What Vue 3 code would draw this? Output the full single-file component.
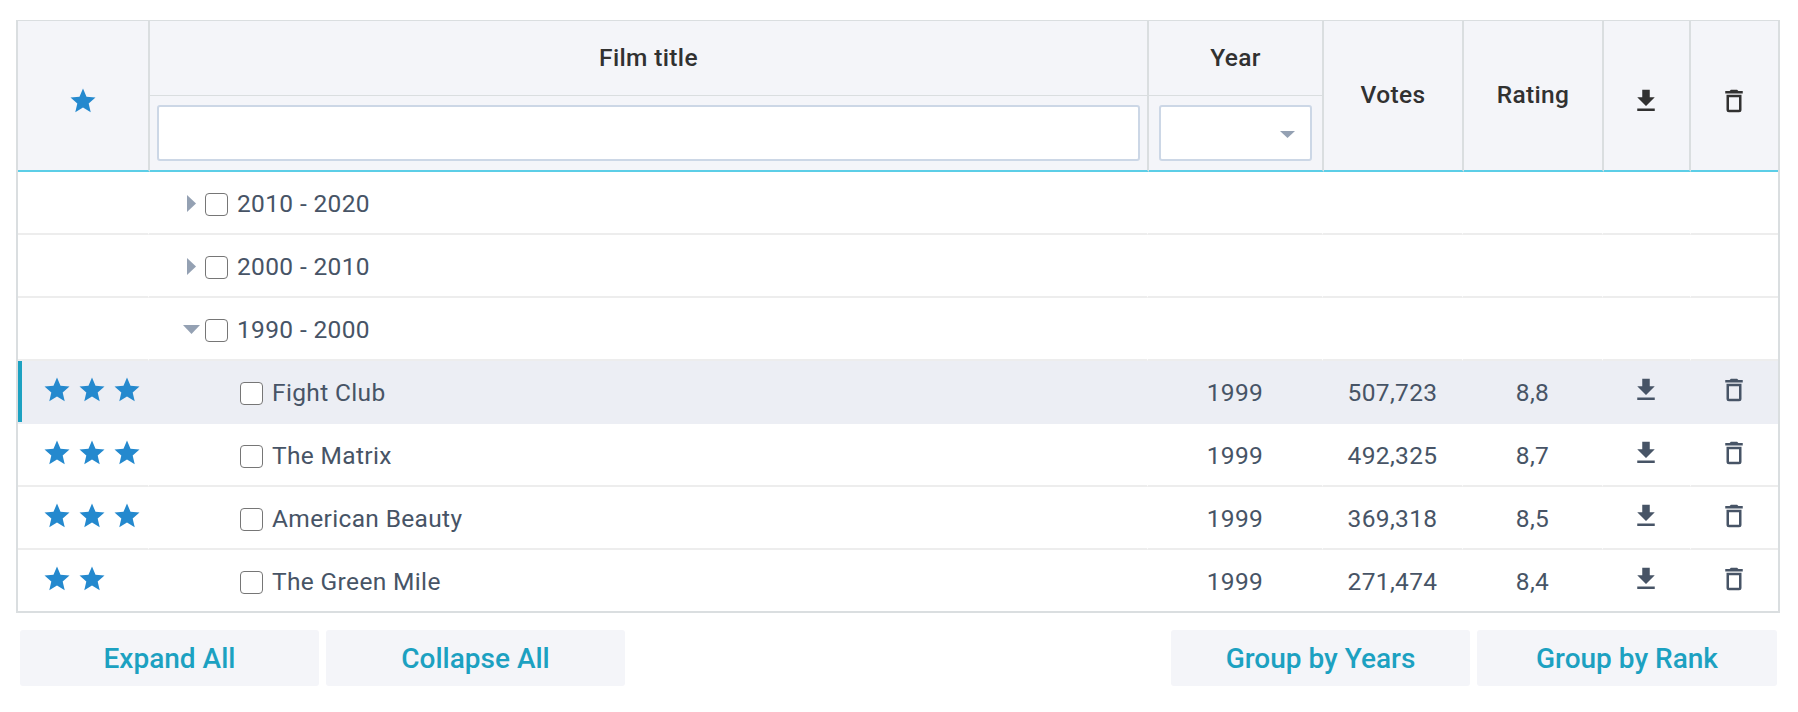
<script setup>
import { ref } from 'vue'

const STAR = 'M12,17.27L18.18,21L16.54,13.97L22,9.24L14.81,8.62L12,2L9.19,8.62L2,9.24L7.45,13.97L5.82,21L12,17.27Z'
const DOWNLOAD = 'M5,20H19V18H5M19,9H15V3H9V9H5L12,16L19,9Z'
const TRASH = 'M6,19A2,2 0 0,0 8,21H16A2,2 0 0,0 18,19V7H6V19M8,9H16V19H8V9M15.5,4L14.5,3H9.5L8.5,4H5V6H19V4H15.5Z'

const filter = ref('')

const rows = [
  { group: true, open: false, title: '2010 - 2020' },
  { group: true, open: false, title: '2000 - 2010' },
  { group: true, open: true, title: '1990 - 2000' },
  { stars: 3, title: 'Fight Club', year: 1999, votes: '507,723', rating: '8,8', selected: true },
  { stars: 3, title: 'The Matrix', year: 1999, votes: '492,325', rating: '8,7' },
  { stars: 3, title: 'American Beauty', year: 1999, votes: '369,318', rating: '8,5' },
  { stars: 2, title: 'The Green Mile', year: 1999, votes: '271,474', rating: '8,4' },
]
</script>

<template>
  <main class="page">
    <section class="table">
      <header class="head">
        <div class="hcell"><svg class="icon star" viewBox="0 0 24 24"><path :d="STAR" /></svg></div>
        <div class="hcell split">
          <div class="caption">Film title</div>
          <div class="filter"><input v-model="filter" class="text-filter" type="text" aria-label="Film title"></div>
        </div>
        <div class="hcell split">
          <div class="caption">Year</div>
          <div class="filter year-filter">
            <div class="select"><svg class="caret" viewBox="0 0 15 7"><path d="M0,0H15L7.5,7Z" /></svg></div>
          </div>
        </div>
        <div class="hcell label">Votes</div>
        <div class="hcell label">Rating</div>
        <div class="hcell tool"><svg class="icon" viewBox="0 0 24 24"><path :d="DOWNLOAD" /></svg></div>
        <div class="hcell tool"><svg class="icon" viewBox="0 0 24 24"><path :d="TRASH" /></svg></div>
      </header>

      <div v-for="row in rows" :key="row.title" class="row" :class="{ selected: row.selected }">
        <div class="cell stars">
          <svg v-for="n in row.stars || 0" :key="n" class="icon star" viewBox="0 0 24 24"><path :d="STAR" /></svg>
        </div>
        <div class="cell title" :class="{ child: !row.group }">
          <span v-if="row.group" class="toggle">
            <svg v-if="row.open" class="down" viewBox="0 0 17 9"><path d="M0,0H17L8.5,9Z" /></svg>
            <svg v-else class="right" viewBox="0 0 9 17"><path d="M0,0L9,8.5L0,17Z" /></svg>
          </span>
          <input class="check" type="checkbox" :aria-label="row.title">
          <span>{{ row.title }}</span>
        </div>
        <div class="cell center">{{ row.year }}</div>
        <div class="cell center">{{ row.votes }}</div>
        <div class="cell center">{{ row.rating }}</div>
        <div class="cell action"><svg v-if="!row.group" class="icon" viewBox="0 0 24 24"><path :d="DOWNLOAD" /></svg></div>
        <div class="cell action"><svg v-if="!row.group" class="icon" viewBox="0 0 24 24"><path :d="TRASH" /></svg></div>
      </div>
    </section>

    <nav class="toolbar">
      <button>Expand All</button>
      <button>Collapse All</button>
      <span class="spacer"></span>
      <button>Group by Years</button>
      <button class="last">Group by Rank</button>
    </nav>
  </main>
</template>

<style>
body {
  background: #fff;
}
</style>

<style scoped>
.page {
  box-sizing: border-box;
  width: 1798px;
  height: 712px;
  padding: 20px 18px 0 16px;
  font-family: Roboto, "Liberation Sans", sans-serif;
  font-size: 24.5px;
  letter-spacing: 0.35px;
  color: #475466;
}
.table {
  box-sizing: border-box;
  height: 593px;
  border: 2px solid #dadee0;
  border-top-width: 1px;
  overflow: hidden;
}
.head {
  display: grid;
  grid-template-columns: 132px 999px 175px 140px 140px 87px 87px;
  height: 151px;
  color: #313131;
  font-weight: 500;
}
.hcell {
  display: flex;
  align-items: center;
  justify-content: center;
  box-sizing: border-box;
  padding-bottom: 1px;
  background: #f4f5f9;
  border-right: 2px solid #dadee0;
  border-bottom: 2px solid #5ccee7;
}
.hcell.label {
  padding-bottom: 3px;
}
.hcell.tool {
  padding-right: 1px;
}
.hcell:last-child {
  border-right: 0;
}
.hcell > .icon {
  margin-top: 11px;
}
.hcell.split {
  flex-direction: column;
  align-items: stretch;
  justify-content: flex-start;
  padding: 0;
}
.caption {
  box-sizing: border-box;
  height: 75px;
  line-height: 74px;
  text-align: center;
  border-bottom: 1px solid #dadee0;
}
.filter {
  display: flex;
  padding: 9px 7px 0;
}
.year-filter {
  padding: 9px 10px 0;
}
.text-filter,
.select {
  box-sizing: border-box;
  flex: 1;
  min-width: 0;
  height: 56px;
  border: 2px solid #ccd7e6;
  border-radius: 3px;
  background: #fff;
}
.text-filter {
  padding: 0 10px;
  font: inherit;
  outline: none;
}
.select {
  display: flex;
  align-items: center;
  justify-content: flex-end;
  padding: 3px 15px 0 0;
}
.icon {
  display: block;
  flex: none;
  width: 30px;
  height: 30px;
  fill: currentColor;
}
.star {
  color: #2489ce;
}
.caret,
.down,
.right {
  display: block;
  fill: #94a1b3;
}
.caret {
  width: 15px;
  height: 7px;
}
.down {
  width: 17px;
  height: 9px;
}
.right {
  width: 9px;
  height: 17px;
}
.row {
  display: grid;
  grid-template-columns: 131px 999px 175px 140px 140px 88px 87px;
  height: 63px;
}
.cell {
  box-sizing: border-box;
  height: 63px;
  line-height: 63px;
  border-right: 1px solid #fff;
  border-bottom: 2px solid #ededed;
  white-space: nowrap;
}
.cell:last-child {
  border-right: 0;
}
.selected .cell {
  background: #eceef4;
  border-color: #eceef4;
}
.selected .stars {
  box-shadow: inset 4px 0 #1ca1c1;
}
.stars {
  display: flex;
  gap: 5px;
  padding: 14px 0 0 23.5px;
}
.title {
  display: flex;
  padding-left: 33px;
}
.title.child {
  padding-left: 91px;
}
.toggle {
  display: flex;
  align-items: center;
  justify-content: center;
  width: 19px;
  height: 62px;
  margin-right: 4px;
}
.down {
  margin-top: 1px;
}
.check {
  appearance: none;
  box-sizing: border-box;
  flex: none;
  width: 23px;
  height: 23px;
  margin: 21px 9px 0 0;
  border: 1px solid #767676;
  border-radius: 4px;
  background: #fff;
}
.center {
  text-align: center;
}
.action {
  display: flex;
  justify-content: center;
  padding: 14px 1px 0 0;
}
.toolbar {
  display: flex;
  gap: 7px;
  padding: 17px 3px 0 4px;
}
.spacer {
  flex: 1;
}
button {
  width: 299px;
  height: 56px;
  padding: 2px 0 0;
  border: 0;
  border-radius: 3px;
  background: #f4f5f9;
  color: #1ca1c1;
  font: 500 28px/54px Roboto, "Liberation Sans", sans-serif;
  letter-spacing: 0;
}
button.last {
  width: 300px;
}
</style>
